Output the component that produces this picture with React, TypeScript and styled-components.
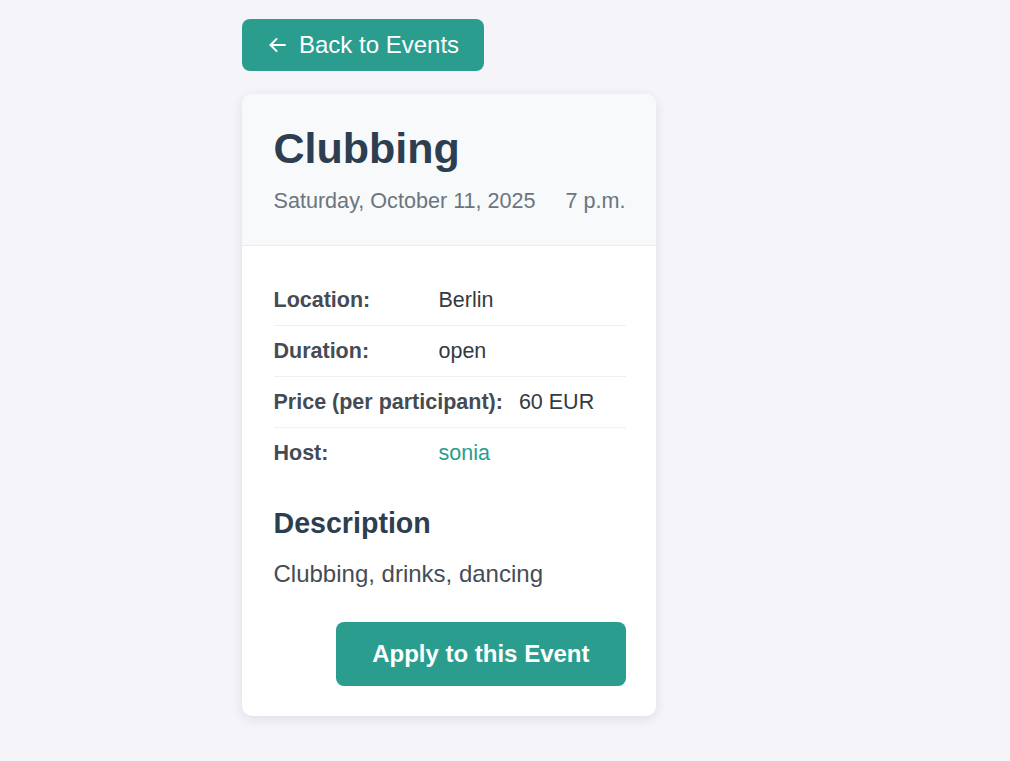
import React from "react";
import styled, { createGlobalStyle } from "styled-components";

const GlobalStyle = createGlobalStyle`
  html, body {
    margin: 0;
    padding: 0;
    background: #f4f4f9;
    font-family: "Liberation Sans", Arial, sans-serif;
  }
  * { box-sizing: border-box; }
`;

const Page = styled.div`
  min-height: 761px;
  padding: 19px 0 40px 242px;
  display: flex;
  flex-direction: column;
  align-items: flex-start;
`;

const BackButton = styled.button`
  display: flex;
  align-items: center;
  gap: 13px;
  padding: 12px 25px 12px 27px;
  background: #2a9d8f;
  color: #ffffff;
  border: none;
  border-radius: 8px;
  font-family: inherit;
  font-size: 24px;
  line-height: 27.6px;
  cursor: pointer;
  margin-bottom: 23px;
`;

const Card = styled.article`
  width: 414px;
  background: #ffffff;
  border-radius: 10px;
  box-shadow: 0 3px 12px rgba(30, 40, 60, 0.1);
  overflow: hidden;
`;

const Header = styled.header`
  background: #f8f9fa;
  border-bottom: 1px solid #e9ecef;
  padding: 29px 30px 31.5px 31.5px;
`;

const Title = styled.h1`
  margin: 0;
  font-size: 43px;
  line-height: 51.2px;
  font-weight: 700;
  color: #2c3e50;
`;

const Meta = styled.div`
  margin-top: 15.6px;
  display: flex;
  gap: 30px;
  font-size: 21.6px;
  line-height: 24px;
  color: #6c757d;
`;

const Body = styled.div`
  padding: 29.5px 30px 30px 31.5px;
  display: flex;
  flex-direction: column;
`;

const Row = styled.div<{ $last?: boolean }>`
  display: flex;
  gap: 16px;
  padding: 12.5px 0 13px;
  border-bottom: ${(p) => (p.$last ? "none" : "1px solid #f0f0f0")};
  font-size: 21.5px;
  line-height: 24.5px;
`;

const Label = styled.span`
  min-width: 149px;
  font-weight: 700;
  color: #444b54;
`;

const Value = styled.span<{ $link?: boolean }>`
  color: ${(p) => (p.$link ? "#2a9d8f" : "#343a40")};
`;

const SectionTitle = styled.h2`
  margin: 29px 0 0;
  font-size: 28.6px;
  line-height: 32.7px;
  font-weight: 700;
  color: #2c3e50;
`;

const Description = styled.p`
  margin: 20px 0 0;
  font-size: 24px;
  line-height: 27.6px;
  color: #454c55;
`;

const Actions = styled.div`
  display: flex;
  justify-content: flex-end;
  margin-top: 34px;
`;

const ApplyButton = styled.button`
  padding: 18.4px 36.5px;
  background: #2a9d8f;
  color: #ffffff;
  border: none;
  border-radius: 8px;
  font-family: inherit;
  font-size: 24px;
  line-height: 27.6px;
  font-weight: 700;
  cursor: pointer;
`;

const ArrowLeft = () => (
  <svg width="17" height="14" viewBox="0 0 17 14" fill="none" stroke="#ffffff" strokeWidth="1.9" strokeLinecap="round" strokeLinejoin="round">
    <path d="M16 7H1.5" />
    <path d="M7.5 1L1.5 7L7.5 13" />
  </svg>
);

const details: { label: string; value: string; link?: boolean }[] = [
  { label: "Location:", value: "Berlin" },
  { label: "Duration:", value: "open" },
  { label: "Price (per participant):", value: "60 EUR" },
  { label: "Host:", value: "sonia", link: true },
];

export default function App() {
  return (
    <>
      <GlobalStyle />
      <Page>
        <BackButton>
          <ArrowLeft />
          Back to Events
        </BackButton>
        <Card>
          <Header>
            <Title>Clubbing</Title>
            <Meta>
              <span>Saturday, October 11, 2025</span>
              <span>7 p.m.</span>
            </Meta>
          </Header>
          <Body>
            {details.map((d, i) => (
              <Row key={d.label} $last={i === details.length - 1}>
                <Label>{d.label}</Label>
                <Value $link={d.link}>{d.value}</Value>
              </Row>
            ))}
            <SectionTitle>Description</SectionTitle>
            <Description>Clubbing, drinks, dancing</Description>
            <Actions>
              <ApplyButton>Apply to this Event</ApplyButton>
            </Actions>
          </Body>
        </Card>
      </Page>
    </>
  );
}
